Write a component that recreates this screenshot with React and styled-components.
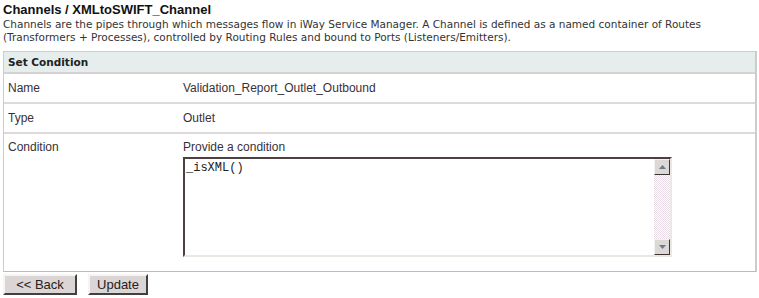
import React from 'react';
import styled, { createGlobalStyle } from 'styled-components';

const GlobalStyle = createGlobalStyle`
  body {
    margin: 0;
    background: #ffffff;
    font-family: "Liberation Sans", Arial, sans-serif;
    color: #333333;
  }
`;

const Page = styled.div`
  padding: 2px 2px 0 3px;
  width: 754px;
`;

const Title = styled.div`
  font-family: "Liberation Sans", Arial, sans-serif;
  font-weight: 700;
  font-size: 13px;
  line-height: 16px;
  color: #111111;
`;

const Description = styled.div`
  font-family: "DejaVu Sans", Verdana, sans-serif;
  font-size: 10.5px;
  line-height: 13px;
  color: #333333;
  white-space: nowrap;
`;

const Panel = styled.div`
  margin-top: 7px;
  border: 1px solid #cccccc;
  border-bottom-color: #b9b9c9;
  border-right-width: 2px;
`;

const Header = styled.div`
  height: 20px;
  line-height: 20px;
  padding-left: 4px;
  background: #e5eeec;
  font-family: "DejaVu Sans", Verdana, sans-serif;
  font-weight: 700;
  font-size: 10.5px;
  color: #222222;
  border-bottom: 2px solid #d6d2d2;
`;

const Row = styled.div`
  display: grid;
  grid-template-columns: 179px 1fr;
  height: ${(p) => (p.$h ? `${p.$h}px` : 'auto')};
  line-height: ${(p) => (p.$h ? `${p.$h}px` : '14px')};
  border-bottom: ${(p) => (p.$last ? 'none' : '2px solid #dedada')};
  font-size: 12px;
  color: #3a3038;
`;

const Label = styled.div`
  padding: ${(p) => (p.$top ? '6px 0 0 4px' : '0 0 0 4px')};
`;

const Value = styled.div`
  padding: ${(p) => (p.$top ? '6px 0 14px 0' : '0')};
`;

const Hint = styled.div`
  margin-bottom: 3px;
`;

const TextBox = styled.div`
  display: flex;
  width: 485px;
  height: 96px;
  border: 2px solid;
  border-color: #4e4040 #ebe8e4 #ebe8e4 #4e4040;
  background: #ffffff;
`;

const Code = styled.textarea`
  flex: 1;
  border: none;
  outline: none;
  resize: none;
  padding: 2px 1px;
  margin: 0;
  font-family: "Liberation Mono", "Courier New", monospace;
  font-size: 12px;
  line-height: 14px;
  color: #222222;
  background: transparent;
  overflow: hidden;
`;

const Scroll = styled.div`
  width: 16px;
  display: flex;
  flex-direction: column;
`;

const Arrow = styled.div`
  width: 16px;
  height: 16px;
  box-sizing: border-box;
  background: #dcd8d6;
  border: 1px solid;
  border-color: #f4f2f0 #3e3434 #3e3434 #f4f2f0;
  display: flex;
  align-items: center;
  justify-content: center;
`;

const Track = styled.div`
  flex: 1;
  background-color: #ffffff;
  background-image: repeating-conic-gradient(#eadce6 0 25%, #ffffff 0 50%);
  background-size: 2px 2px;
`;

const Buttons = styled.div`
  display: flex;
  gap: 11px;
  margin-top: 2px;
`;

const Button = styled.button`
  height: 21px;
  width: ${(p) => p.$w}px;
  padding: 0;
  background: #dcd5d5;
  border: 2px solid;
  border-color: #f6f4f4 #404040 #404040 #f6f4f4;
  font-family: "Liberation Sans", Arial, sans-serif;
  font-size: 13px;
  color: #222222;
`;

const Tri = ({ up }) => (
  <svg width="7" height="4" viewBox="0 0 7 4">
    <path d={up ? 'M0 4 L3.5 0 L7 4 Z' : 'M0 0 L3.5 4 L7 0 Z'} fill="#6a7c8c" />
  </svg>
);

export default function App() {
  return (
    <Page>
      <GlobalStyle />
      <Title>Channels / XMLtoSWIFT_Channel</Title>
      <Description>
        Channels are the pipes through which messages flow in iWay Service Manager. A Channel is defined as a named container of Routes
        <br />
        (Transformers + Processes), controlled by Routing Rules and bound to Ports (Listeners/Emitters).
      </Description>
      <Panel>
        <Header>Set Condition</Header>
        <Row $h={28}>
          <Label>Name</Label>
          <Value>Validation_Report_Outlet_Outbound</Value>
        </Row>
        <Row $h={28}>
          <Label>Type</Label>
          <Value>Outlet</Value>
        </Row>
        <Row $last>
          <Label $top>Condition</Label>
          <Value $top>
            <Hint>Provide a condition</Hint>
            <TextBox>
              <Code defaultValue="_isXML()" spellCheck={false} />
              <Scroll>
                <Arrow><Tri up /></Arrow>
                <Track />
                <Arrow><Tri /></Arrow>
              </Scroll>
            </TextBox>
          </Value>
        </Row>
      </Panel>
      <Buttons>
        <Button $w={74}>&lt;&lt; Back</Button>
        <Button $w={60}>Update</Button>
      </Buttons>
    </Page>
  );
}
